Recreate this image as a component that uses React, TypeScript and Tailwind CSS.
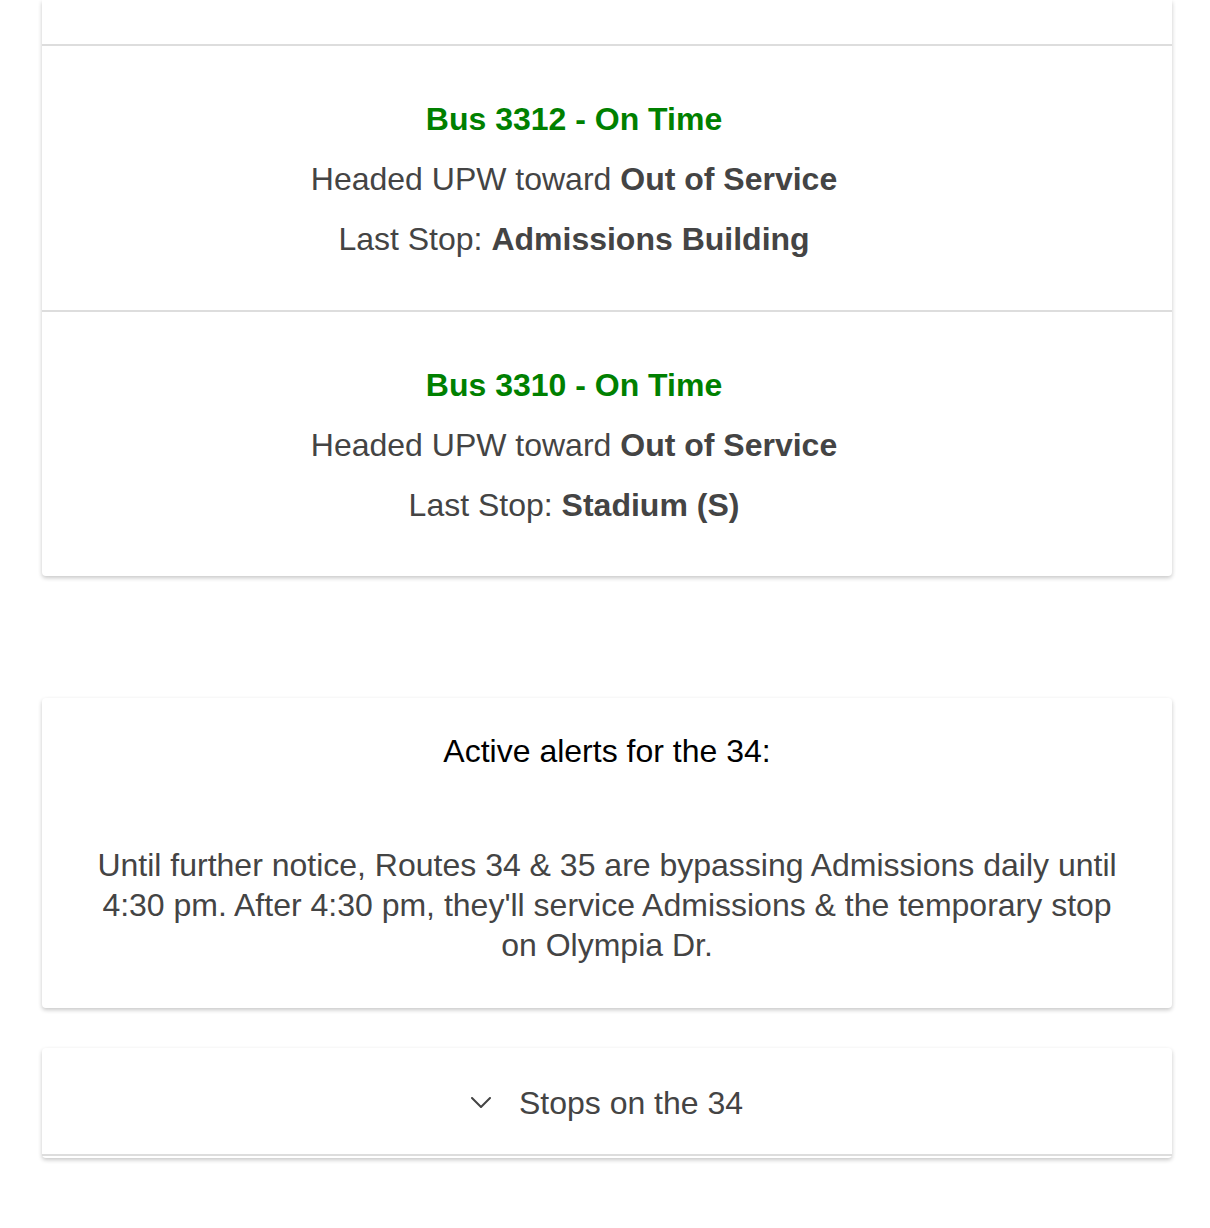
const buses = [
  { id: '3312', status: 'On Time', direction: 'UPW', toward: 'Out of Service', lastStop: 'Admissions Building' },
  { id: '3310', status: 'On Time', direction: 'UPW', toward: 'Out of Service', lastStop: 'Stadium (S)' },
];

const BusRow = ({ bus }: { bus: (typeof buses)[number] }) => (
  <div className="border-t-2 border-[#dddddd] pt-[53px] pb-[51px] pr-[66px] text-center text-[32px] leading-[40px] text-[#444444]">
    <p className="font-bold text-[#008000]">
      Bus {bus.id} - {bus.status}
    </p>
    <p className="mt-[20px]">
      Headed {bus.direction} toward <span className="font-bold">{bus.toward}</span>
    </p>
    <p className="mt-[20px]">
      Last Stop: <span className="font-bold">{bus.lastStop}</span>
    </p>
  </div>
);

export default function App() {
  return (
    <div
      className="min-h-[1228px] w-[1210px] bg-white pl-[42px] pr-[38px]"
      style={{ fontFamily: '"Liberation Sans", Arial, Helvetica, sans-serif' }}
    >
      {/* bus list card, scrolled so its top is cut off */}
      <div className="rounded-b-[4px] bg-white shadow-[0_2px_4px_rgba(0,0,0,0.22)]">
        <div className="h-[44px]" />
        {buses.map((bus) => (
          <BusRow key={bus.id} bus={bus} />
        ))}
      </div>

      {/* alerts */}
      <div className="mt-[122px] rounded-[4px] bg-white px-[50px] pt-[33px] pb-[43px] text-center shadow-[0_2px_4px_rgba(0,0,0,0.22)]">
        <h3 className="text-[32px] leading-[40px] text-black">Active alerts for the 34:</h3>
        <p className="mt-[74px] text-[32px] leading-[40px] text-[#444444]">
          Until further notice, Routes 34 &amp; 35 are bypassing Admissions daily until 4:30 pm. After 4:30 pm,
          they'll service Admissions &amp; the temporary stop on Olympia Dr.
        </p>
      </div>

      {/* stops accordion */}
      <div className="mt-[40px] rounded-[4px] bg-white shadow-[0_2px_4px_rgba(0,0,0,0.22)]">
        <button className="flex h-[106px] w-full items-center justify-center gap-[28px] pt-[4px] text-[32px] text-[#444444]">
          <svg width="20" height="11" viewBox="0 0 20 11" fill="none" className="mt-[-2px]">
            <path d="M1 1l9 9 9-9" stroke="#444444" strokeWidth="2" strokeLinecap="round" strokeLinejoin="round" />
          </svg>
          <span>Stops on the 34</span>
        </button>
        <div className="h-[2px] bg-[#dddddd]" />
        <div className="h-[2px]" />
      </div>
    </div>
  );
}
